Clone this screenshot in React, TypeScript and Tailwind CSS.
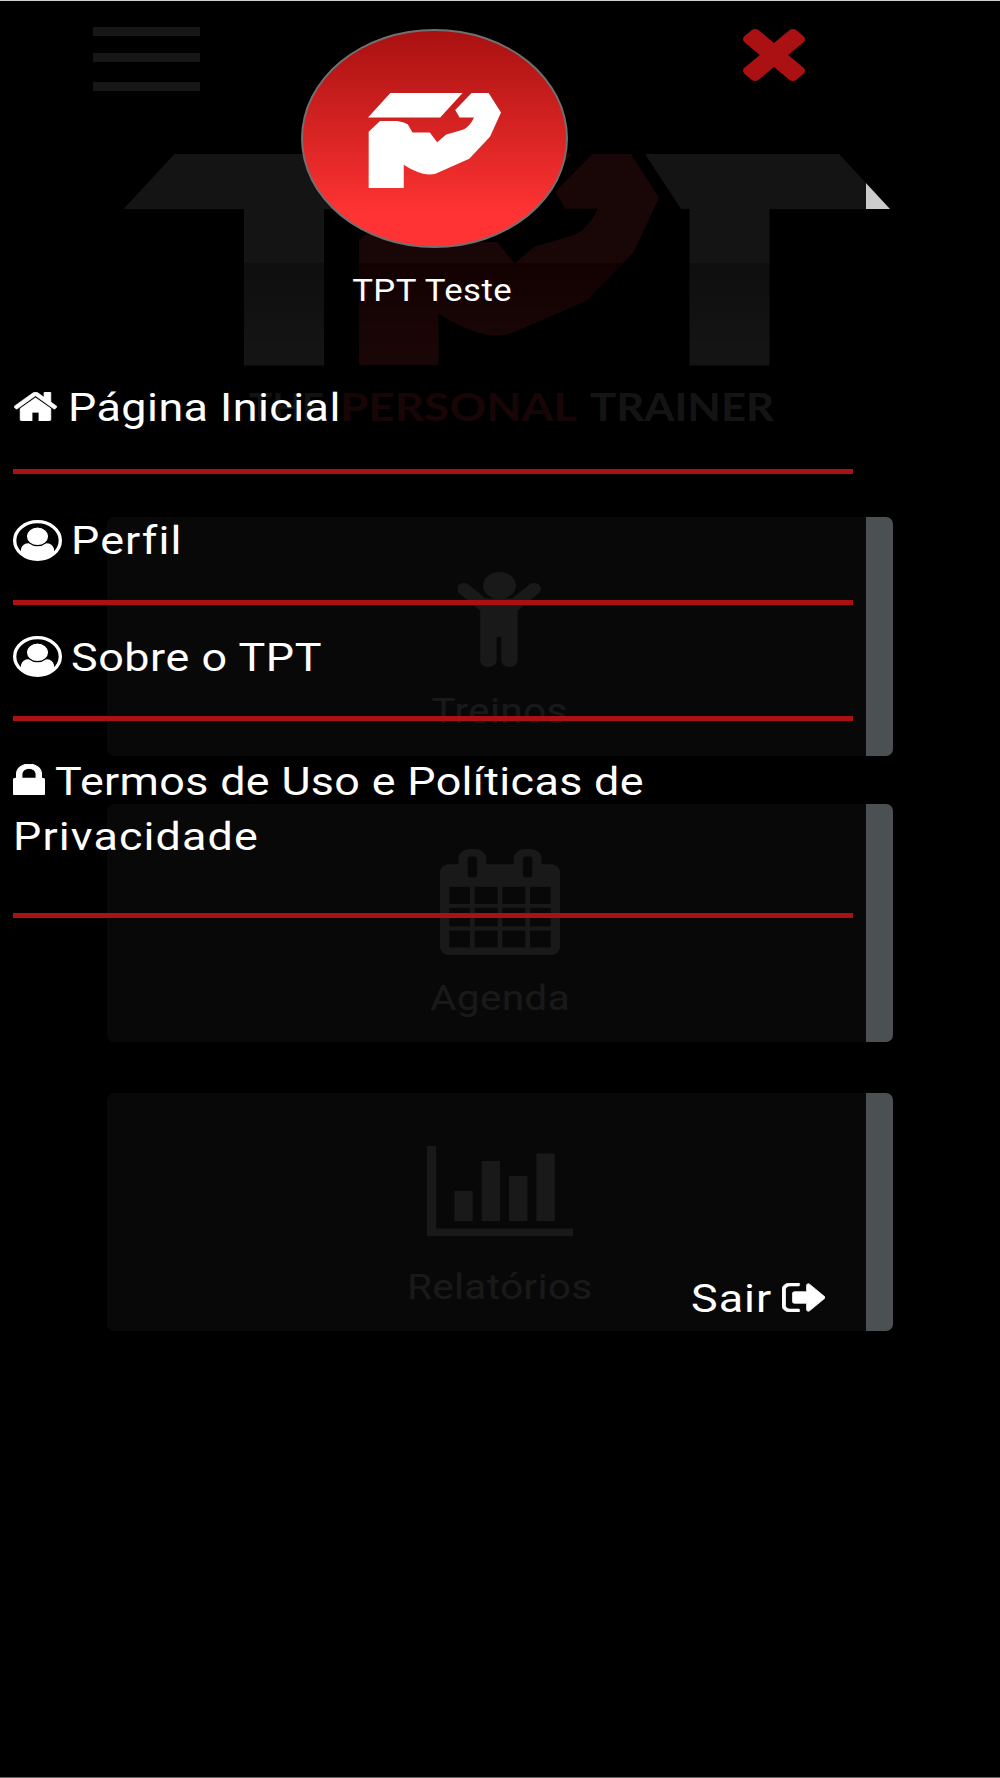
import type { ReactNode } from "react";

type GlyphProps = { viewBox: string; d: string; className: string };

// Stretches to whatever box the classes give it
function Glyph({ viewBox, d, className }: GlyphProps) {
  return (
    <svg viewBox={viewBox} preserveAspectRatio="none" fill="currentColor" className={`block shrink-0 ${className}`}>
      <path d={d} />
    </svg>
  );
}

const timesPath =
  "M1490 1322q0 40-28 68l-136 136q-28 28-68 28t-68-28l-294-294-294 294q-28 28-68 28t-68-28l-136-136q-28-28-28-68t28-68l294-294-294-294q-28-28-28-68t28-68l136-136q28-28 68-28t68 28l294 294 294-294q28-28 68-28t68 28l136 136q28 28 28 68t-28 68l-294 294 294 294q28 28 28 68z";
const childPath =
  "M1436 508l-292 292v824q0 46-33 79t-79 33-79-33-33-79v-384h-64v384q0 46-33 79t-79 33-79-33-33-79v-824l-292-292q-28-28-28-68t28-68q29-28 68.500-28t67.500 28l228 228h368l228-228q28-28 68-28t68 28q28 29 28 68.500t-28 67.500zm-316-124q0 93-65.500 158.500t-158.500 65.500-158.500-65.500-65.500-158.500 65.500-158.500 158.500-65.500 158.500 65.500 65.500 158.500z";
const calendarPath =
  "M192 1664h288v-288h-288v288zm352 0h320v-288h-320v288zm-352-352h288v-320h-288v320zm352 0h320v-320h-320v320zm-352-384h288v-288h-288v288zm736 736h320v-288h-320v288zm-384-736h320v-288h-320v288zm768 736h288v-288h-288v288zm-384-352h320v-320h-320v320zm-352-864v-288q0-13-9.500-22.500t-22.500-9.500h-64q-13 0-22.500 9.500t-9.500 22.500v288q0 13 9.500 22.500t22.500 9.500h64q13 0 22.500-9.500t9.500-22.500zm736 864h288v-320h-288v320zm-384-384h320v-288h-320v288zm384 0h288v-288h-288v288zm32-480v-288q0-13-9.500-22.500t-22.500-9.500h-64q-13 0-22.500 9.500t-9.500 22.500v288q0 13 9.500 22.500t22.500 9.500h64q13 0 22.500-9.500t9.500-22.500zm384-64v1280q0 52-38 90t-90 38h-1408q-52 0-90-38t-38-90v-1280q0-52 38-90t90-38h128v-96q0-66 47-113t113-47h64q66 0 113 47t47 113v96h384v-96q0-66 47-113t113-47h64q66 0 113 47t47 113v96h128q52 0 90 38t38 90z";
const chartPath =
  "M640 896v512h-256v-512h256zm384-512v1024h-256v-1024h256zm1024 1152v128h-2048v-1536h128v1408h1920zm-640-896v768h-256v-768h256zm384-384v1152h-256v-1152h256z";
const homePath =
  "M1472 992v480q0 26-19 45t-45 19h-384v-384h-256v384h-384q-26 0-45-19t-19-45v-480q0-1 .5-3t.5-3l575-474 575 474q1 2 1 6zm223-69l-62 74q-8 9-21 11h-3q-13 0-21-7l-692-577-692 577q-12 8-24 7-13-2-21-11l-62-74q-8-10-7-23.500t11-21.500l719-599q32-26 76-26t76 26l244 204v-195q0-14 9-23t23-9h192q14 0 23 9t9 23v408l219 182q10 8 11 21.500t-7 23.500z";
const lockPath =
  "M640 768h512v-192q0-106-75-181t-181-75-181 75-75 181v192zm832 96v576q0 40-28 68t-68 28h-960q-40 0-68-28t-28-68v-576q0-40 28-68t68-28h32v-192q0-184 132-316t316-132 316 132 132 316v192h32q40 0 68 28t28 68z";
const signOutPath =
  "M704 1440q0 4 1 20t.5 26.500-3 23.500-10 19.500-20.500 6.500h-320q-119 0-203.500-84.500t-84.500-203.500v-704q0-119 84.500-203.500t203.500-84.500h320q13 0 22.500 9.500t9.500 22.500q0 4 1 20t.5 26.500-3 23.500-10 19.500-20.500 6.500h-320q-66 0-113 47t-47 113v704q0 66 47 113t113 47h312l11.500 1 11.500 3 8 5.500 7 9 2 13.500zm928-544q0 26-19 45l-544 544q-19 19-45 19t-45-19-19-45v-288h-448q-26 0-45-19t-19-45v-384q0-26 19-45t45-19h448v-288q0-26 19-45t45-19 45 19l544 544q19 19 19 45z";
const armPath =
  "M265 324L332 250H548L481 324ZM267 367L301 334H352Q372 337 384 344L398 369H450L472 398L499 375Q528 367 553 359Q572 348 582 324H539L526 301L575 250H626L663 309L630 382L568 448L467 493Q452 498 430 493Q402 486 372 466V536H267Z";

function UserCircle() {
  return (
    <svg viewBox="0 0 147 123" preserveAspectRatio="none" className="block h-[41px] w-[49px] shrink-0">
      <ellipse cx="73.5" cy="61.5" rx="68.5" ry="56.5" fill="none" stroke="white" strokeWidth="10" />
      <path d="M24 102V87Q28 70 48 70H99Q119 70 123 87V102Q100 118 73.5 118T24 102Z" fill="white" />
      <ellipse cx="73.5" cy="49" rx="33.5" ry="28" fill="white" stroke="black" strokeWidth="3.5" />
    </svg>
  );
}

function Logo() {
  return (
    <svg width="1000" height="290" viewBox="0 150 1000 290" className="block">
      <defs>
        <linearGradient id="steel" gradientUnits="userSpaceOnUse" x1="0" y1="154" x2="0" y2="366">
          <stop offset="0.515" stopColor="#cccccc" />
          <stop offset="0.515" stopColor="#929292" />
          <stop offset="0.9" stopColor="#c8c8c8" />
        </linearGradient>
        <linearGradient id="blood" gradientUnits="userSpaceOnUse" x1="0" y1="250" x2="0" y2="536">
          <stop offset="0.515" stopColor="#ff3c3c" />
          <stop offset="0.515" stopColor="#c01010" />
          <stop offset="0.9" stopColor="#ff3c3c" />
        </linearGradient>
      </defs>
      <path d="M123.5 209L174.5 154H380L335 209H324V365.5H244V209Z" fill="url(#steel)" />
      <svg x="357.5" y="154" width="301.5" height="211.5" viewBox="265 250 398 286" preserveAspectRatio="none">
        <path d={armPath} fill="url(#blood)" />
      </svg>
      <path d="M645 154H839L890 209H769.5V365.5H689.5V209H681Z" fill="url(#steel)" />
      <g fontFamily="Lato, sans-serif" fontWeight="700" fontSize="39">
        <text x="249" y="420.5" textLength="75" lengthAdjust="spacingAndGlyphs" fill="#bbb">THE</text>
        <text x="340" y="420.5" textLength="237" lengthAdjust="spacingAndGlyphs" fill="#f03434">PERSONAL</text>
        <text x="590" y="420.5" textLength="184" lengthAdjust="spacingAndGlyphs" fill="#ccc">TRAINER</text>
      </g>
    </svg>
  );
}

function Card({ label, children }: { label: string; children: ReactNode }) {
  return (
    <div className="flex h-[238.5px] flex-col items-center rounded-[7px] bg-[linear-gradient(90deg,#555_759px,#4b5052_759px)] text-white">
      <div className="flex h-[162px] w-full items-end justify-center">{children}</div>
      <span className="mt-auto mb-[24.5px] block scale-x-[1.16] text-[34.5px] leading-[40px] tracking-[0.5px]">
        {label}
      </span>
    </div>
  );
}

function Label({ children, className = "tracking-[0.3px]" }: { children: ReactNode; className?: string }) {
  return (
    <span className={`relative top-px block origin-left scale-x-[1.15] text-[39px] leading-[55px] whitespace-nowrap ${className}`}>
      {children}
    </span>
  );
}

export default function App() {
  return (
    <div className="relative h-[1778px] w-[1000px] overflow-hidden border-t border-b border-t-[#ccd2d2] border-b-[#666] bg-black font-['Roboto',sans-serif]">
      {/* home screen */}
      <div className="flex h-[149px] flex-col pt-[26px] pl-[93px]">
        <div className="h-[9px] w-[107px] bg-[#e8e8e8]" />
        <div className="mt-[17px] h-[9px] w-[107px] bg-[#e8e8e8]" />
        <div className="mt-[20px] h-[8.5px] w-[107px] bg-[#e8e8e8]" />
      </div>
      <Logo />
      <div className="mx-[107px] mt-[77px] flex flex-col">
        <Card label="Treinos">
          <Glyph viewBox="328 160 1136 1576" d={childPath} className="mr-px mb-[12px] h-[95px] w-[83px]" />
        </Card>
        <div className="mt-[48px] mb-[50.5px]">
          <Card label="Agenda">
            <Glyph viewBox="64 0 1664 1792" d={calendarPath} className="mb-[11px] h-[106px] w-[120px]" />
          </Card>
        </div>
        <Card label="Relatórios">
          <Glyph viewBox="0 128 2048 1536" d={chartPath} className="mb-[19px] h-[90px] w-[146px]" />
        </Card>
      </div>

      {/* side drawer */}
      <div className="absolute top-0 left-0 flex h-full w-[866px] flex-col bg-black/90 px-[13px] text-white">
        <div className="flex h-[376px] justify-between">
          <div className="w-[287px]" />
          <div className="flex w-[268px] flex-col items-center pt-[28px]">
            <div className="flex h-[219px] w-[267px] justify-center rounded-[50%] border-2 border-[#707070] bg-linear-to-b from-[#a91010] to-[#ff3333] to-85% pt-[62px]">
              <Glyph viewBox="265 250 398 286" d={armPath} className="h-[95px] w-[133px]" />
            </div>
            <span className="mt-[25px] -ml-[4px] block scale-x-[1.14] text-[30.5px] leading-[36px] tracking-[0.4px] whitespace-nowrap">
              TPT Teste
            </span>
          </div>
          <div className="flex w-[285px] pt-[28px] pl-[175px]">
            <Glyph viewBox="302 366 1188 1188" d={timesPath} className="h-[52px] w-[62px] text-[#ab1012]" />
          </div>
        </div>
        <ul>
          <li className="flex h-[97px] border-b-[5px] border-[#ab1012] pt-[3px]">
            <Glyph
              viewBox="89 253 1614 1283"
              d={homePath}
              className="mt-[12px] mr-[11px] ml-px h-[29px] w-[43px] stroke-current stroke-[25px]"
            />
            <Label className="tracking-[0.4px]">Página Inicial</Label>
          </li>
          <li className="flex h-[131px] border-b-[5px] border-[#ab1012] pt-[39px]">
            <div className="mt-[7px] mr-[9px]">
              <UserCircle />
            </div>
            <Label className="tracking-[1px]">Perfil</Label>
          </li>
          <li className="flex h-[116px] border-b-[5px] border-[#ab1012] pt-[25px]">
            <div className="mt-[6px] mr-[9px]">
              <UserCircle />
            </div>
            <Label className="tracking-[0.5px]">Sobre o TPT</Label>
          </li>
          <li className="h-[197px] border-b-[5px] border-[#ab1012] pt-[33px]">
            <div className="flex">
              <Glyph
                viewBox="320 128 1152 1408"
                d={lockPath}
                className="mt-[10px] mr-[10px] h-[31px] w-[32px] stroke-current stroke-[40px]"
              />
              <Label>Termos de Uso e Políticas de</Label>
            </div>
            <Label className="tracking-[1px]">Privacidade</Label>
          </li>
        </ul>
        <div className="mt-[353px] flex w-[812px] justify-end">
          <div className="mr-[20px]">
            <Label className="tracking-[0.9px]">Sair</Label>
          </div>
          <Glyph
            viewBox="64 256 1568 1280"
            d={signOutPath}
            className="mt-[12px] h-[29px] w-[43px] stroke-current stroke-[30px]"
          />
        </div>
      </div>
    </div>
  );
}
